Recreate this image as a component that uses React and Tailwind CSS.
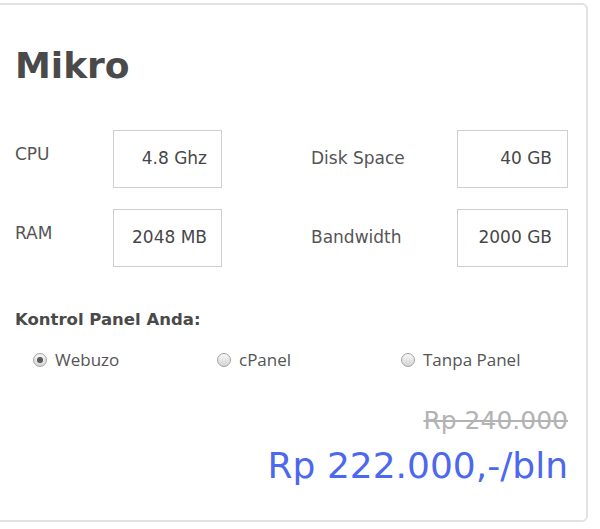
const specs = [
    { label: "CPU", value: "4.8 Ghz", label2: "Disk Space", value2: "40 GB" },
    { label: "RAM", value: "2048 MB", label2: "Bandwidth", value2: "2000 GB" },
];

const panels = [
    { name: "Webuzo", checked: true },
    { name: "cPanel", checked: false },
    { name: "Tanpa Panel", checked: false },
];

const Radio = ({ checked }) => (
    <span className="w-[14px] h-[14px] rounded-full border border-[#a3a3a3] bg-gradient-to-b from-[#f7f7f7] to-[#d4d4d4] flex items-center justify-center shrink-0">
        {checked && <span className="w-[6px] h-[6px] rounded-full bg-[#5a5a5a]" />}
    </span>
);

export default function App() {
    return (
        <div className="bg-white w-[600px] h-[529px] overflow-hidden pt-[3px]">
            <div
                className="ml-[-12px] w-[600px] h-[519px] border-2 border-[#e2e2e2] rounded-md pl-[25px] pr-[18px] pt-[39px] flex flex-col"
                style={{ fontFamily: '"DejaVu Sans", sans-serif' }}
            >
                {/* Title */}
                <h1 className="text-[36px] leading-[44px] font-bold text-[#4a4a4a]">Mikro</h1>

                {/* Specs */}
                <div className="mt-[42px] flex flex-col gap-[21px]">
                    {specs.map((row) => (
                        <div
                            key={row.label}
                            className="grid grid-cols-[98px_109px_89px_146px_111px] h-[58px] items-center text-[17px] text-[#555]"
                        >
                            <span className="mb-2">{row.label}</span>
                            <div className="h-full border border-[#cfcfcf] flex items-center justify-end pr-[14px] text-[#474747]">
                                {row.value}
                            </div>
                            <span />
                            <span>{row.label2}</span>
                            <div className="h-full border border-[#cfcfcf] flex items-center justify-end pr-[15px] text-[#474747]">
                                {row.value2}
                            </div>
                        </div>
                    ))}
                </div>

                {/* Control panel */}
                <p className="mt-[43px] text-[16.5px] leading-[20px] font-bold text-[#4a4a4a]">Kontrol Panel Anda:</p>
                <div
                    className="mt-[17px] w-[552px] grid grid-cols-3 h-[24px] text-[17px] text-[#555]"
                    style={{ fontFamily: '"Open Sans", sans-serif' }}
                >
                    {panels.map((p) => (
                        <label key={p.name} className="flex items-center gap-[8px] pl-[18px]">
                            <Radio checked={p.checked} />
                            <span>{p.name}</span>
                        </label>
                    ))}
                </div>

                {/* Price */}
                <div className="mt-[35px] w-[553px] flex flex-col items-end">
                    <span className="text-[25px] leading-[30px] text-[#b3b3b3] line-through decoration-[2px]">Rp 240.000</span>
                    <span className="mt-[9px] text-[36px] leading-[42px] text-[#4b68ee]">Rp 222.000,-/bln</span>
                </div>
            </div>
        </div>
    );
}
